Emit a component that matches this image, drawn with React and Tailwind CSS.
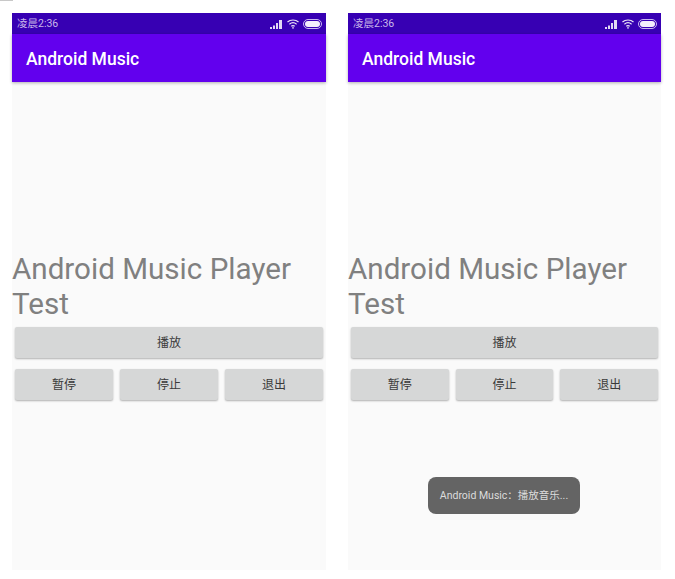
import React from "react";

const cjk = "font-['Roboto','Noto_Sans_CJK_SC',sans-serif]";

function StatusIcons() {
  return (
    <div className="flex items-center gap-[4px]">
      {/* signal */}
      <svg width="13" height="10" viewBox="0 0 13 10" fill="#fff" opacity="0.85">
        <rect x="0" y="8" width="2" height="2" />
        <rect x="3" y="6.5" width="2" height="3.5" />
        <rect x="6" y="4" width="2" height="6" />
        <rect x="9" y="1" width="3" height="9" />
      </svg>
      {/* wifi */}
      <svg width="12" height="10" viewBox="0 0 12 10" fill="none" stroke="#fff" strokeWidth="1.2" opacity="0.9">
        <path d="M0.5 3 C3.5 0.3 8.5 0.3 11.5 3" />
        <path d="M2.4 5.2 C4.5 3.5 7.5 3.5 9.6 5.2" />
        <path d="M4.3 7.3 C5.3 6.5 6.7 6.5 7.7 7.3" />
        <circle cx="6" cy="8.9" r="0.8" fill="#fff" stroke="none" />
      </svg>
      {/* battery */}
      <div className="h-[10px] w-[19px] rounded-full border border-[#c9b8f0] p-[1px]">
        <div className="h-full w-full rounded-full bg-[#f3eefc]" />
      </div>
    </div>
  );
}

function ActionButton({ label, className }) {
  return (
    <button className={`h-[31px] rounded-[2px] bg-[#d6d7d7] text-[12px] text-[#3a3a3a] shadow-[0_1px_2px_rgba(0,0,0,0.3)] ${className}`}>
      {label}
    </button>
  );
}

function Phone({ width, toast }) {
  return (
    <div className={`relative flex h-[557px] flex-col bg-[#fafafa] ${cjk} ${width}`}>
      <div className="flex h-[21px] items-center justify-between bg-[#3700b3] pl-[5px] pr-[4px] text-[10.5px] text-[#c9b8ea]">
        <span>凌晨2:36</span>
        <StatusIcons />
      </div>
      <div className="flex h-[48px] items-center bg-[#6200ee] pl-[14px] pt-[2px] text-[17.5px] font-medium text-white shadow-[0_1px_3px_rgba(0,0,0,0.3)]">
        Android Music
      </div>
      <div className="flex flex-col pt-[170px]">
        <h1 className="text-[29.6px] leading-[35px] font-normal text-[#808080]">Android Music Player Test</h1>
        <div className="flex flex-col gap-[11px] px-[3px] pt-[5px]">
          <ActionButton label="播放" className="w-full" />
          <div className="flex gap-[7px]">
            <ActionButton label="暂停" className="flex-1" />
            <ActionButton label="停止" className="flex-1" />
            <ActionButton label="退出" className="flex-1" />
          </div>
        </div>
      </div>
      {toast && (
        <div className="absolute left-[80px] top-[464px] flex h-[37px] w-[152px] items-center justify-center rounded-[8px] bg-[#646464] text-[10.5px] whitespace-nowrap text-[#dcdcdc]">
          {toast}
        </div>
      )}
    </div>
  );
}

export default function App() {
  return (
    <div className="relative flex h-[579px] w-[675px] gap-[22px] bg-white pl-[12px] pt-[13px]">
      {/* scrap of grey left over at the top corner of the picture */}
      <div className="absolute left-0 top-0 h-px w-[13px] bg-[#c8c8c8]" />
      <Phone width="w-[314px]" />
      <Phone width="w-[313px]" toast="Android Music：播放音乐..." />
    </div>
  );
}
